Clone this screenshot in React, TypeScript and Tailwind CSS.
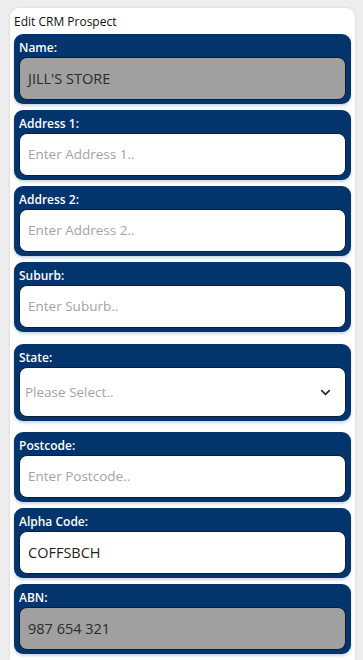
import React from "react";
import { ChevronDown } from "lucide-react";

type FieldProps = {
  label: string;
  value?: string;
  placeholder?: string;
  gray?: boolean;
  select?: boolean;
  className?: string;
};

function Field({ label, value, placeholder, gray, select, className }: FieldProps) {
  return (
    <div
      className={
        "mx-[4px] rounded-[9px] bg-[#03346b] px-[5px] pb-[4px] pt-[3px] shadow-[0_2px_3px_rgba(40,90,150,0.25)] " +
        (className ?? "")
      }
    >
      <div className="h-[20px] text-[12px] font-semibold leading-[21px] text-white">{label}</div>
      {select ? (
        <div className="flex h-[50px] items-center justify-between rounded-[8px] border border-[#0b1f3a] bg-white pl-[5px] pr-[12px]">
          <span className="text-[13.5px] text-[#a3a3a3]">Please Select..</span>
          <ChevronDown size={15} strokeWidth={2.6} color="#1e2a3b" />
        </div>
      ) : (
        <div
          className={
            "flex h-[43px] items-center rounded-[8px] border px-[8px] " +
            (gray
              ? "border-[#1a1a1a] bg-[#a0a0a0] text-[14.5px] text-[#2b2b2b]"
              : "border-[#0b1f3a] bg-white " +
                (value ? "text-[14.5px] text-[#1f1f1f]" : "text-[13.5px] text-[#a3a3a3]"))
          }
        >
          {value ?? placeholder}
        </div>
      )}
    </div>
  );
}

export default function App() {
  return (
    <div
      className="min-h-[660px] bg-[#eeeeee] pl-[10px] pr-[8px] pt-[8px]"
      style={{ fontFamily: '"Open Sans", "Noto Sans", sans-serif' }}
    >
      <div className="min-h-[652px] rounded-t-[9px] bg-white shadow-[0_0_3px_rgba(0,0,0,0.12)]">
        <div className="h-[26px] pl-[4px] pt-[5px] text-[12px] leading-[18px] text-[#111]">Edit CRM Prospect</div>
        <div className="flex flex-col">
          <Field label="Name:" value="JILL'S STORE" gray />
          <Field label="Address 1:" placeholder="Enter Address 1.." className="mt-[6px]" />
          <Field label="Address 2:" placeholder="Enter Address 2.." className="mt-[6px]" />
          <Field label="Suburb:" placeholder="Enter Suburb.." className="mt-[6px]" />
          <Field label="State:" select className="mt-[12px]" />
          <Field label="Postcode:" placeholder="Enter Postcode.." className="mt-[11px]" />
          <Field label="Alpha Code:" value="COFFSBCH" className="mt-[6px]" />
          <Field label="ABN:" value="987 654 321" gray className="mt-[6px]" />
        </div>
      </div>
    </div>
  );
}
